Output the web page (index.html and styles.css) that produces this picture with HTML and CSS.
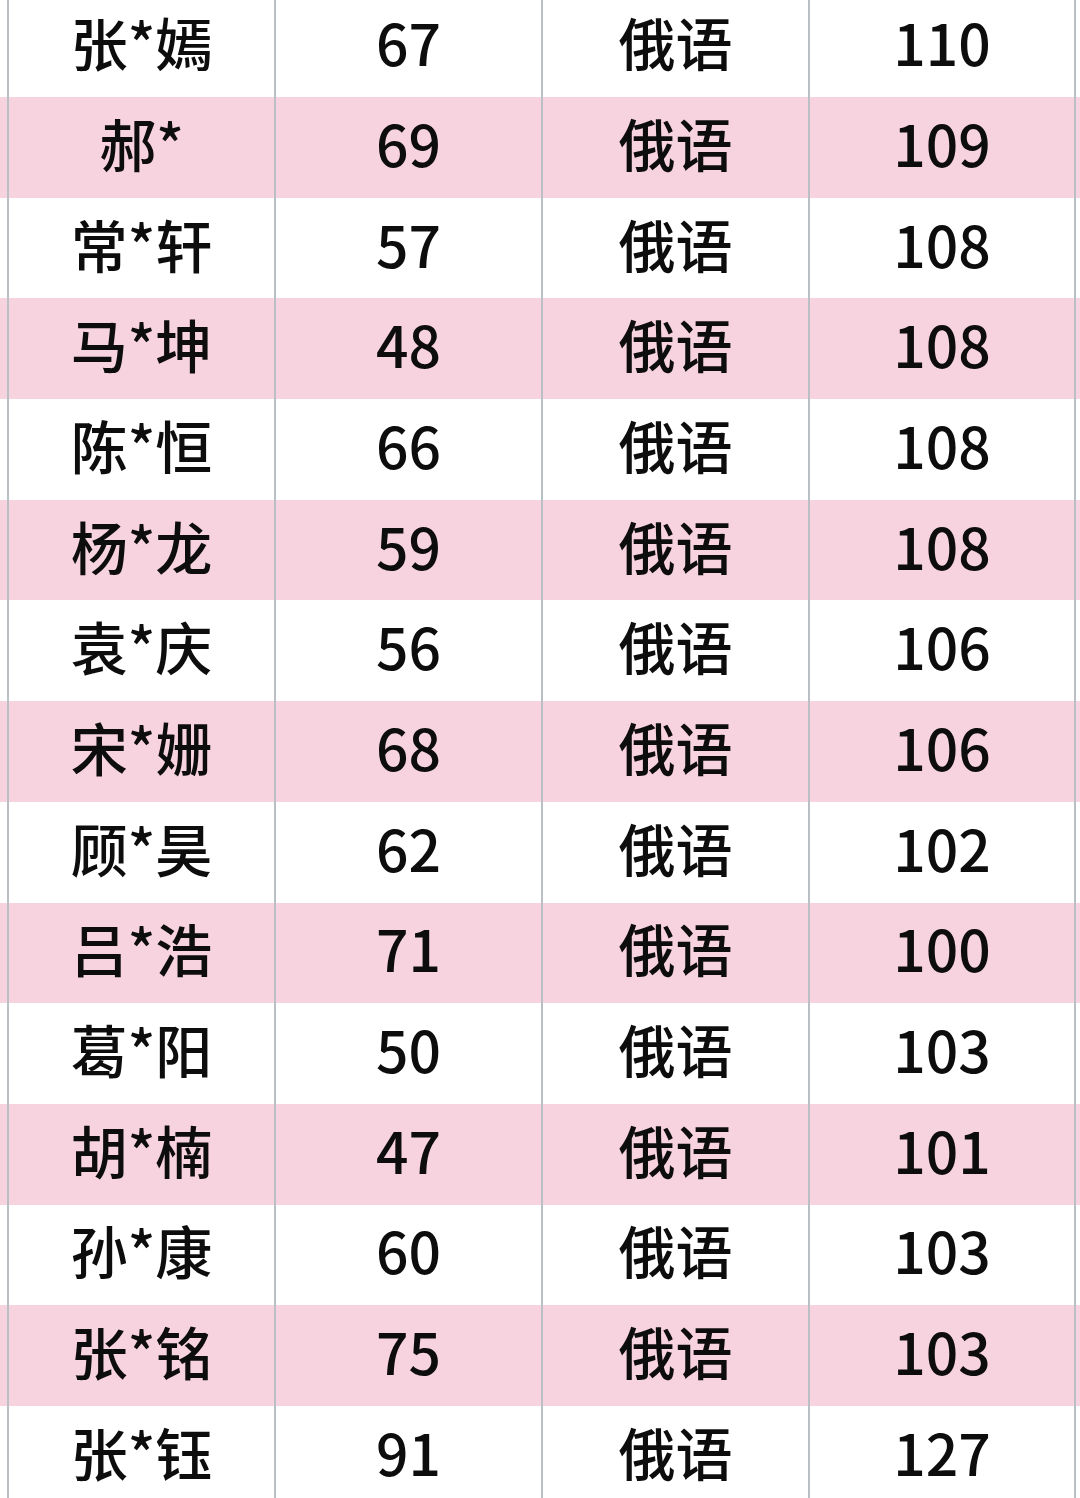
FILE: index.html
```html
<!DOCTYPE html>
<html lang="zh">
<head>
<meta charset="utf-8">
<title>成绩表</title>
<link rel="stylesheet" href="styles.css">
</head>
<body>
<div class="page">
  <div class="table">
    <div class="row"><div class="cell">张*嫣</div><div class="cell">67</div><div class="cell">俄语</div><div class="cell last">110</div></div>
    <div class="row pink"><div class="cell">郝*</div><div class="cell">69</div><div class="cell">俄语</div><div class="cell last">109</div></div>
    <div class="row"><div class="cell">常*轩</div><div class="cell">57</div><div class="cell">俄语</div><div class="cell last">108</div></div>
    <div class="row pink"><div class="cell">马*坤</div><div class="cell">48</div><div class="cell">俄语</div><div class="cell last">108</div></div>
    <div class="row"><div class="cell">陈*恒</div><div class="cell">66</div><div class="cell">俄语</div><div class="cell last">108</div></div>
    <div class="row pink"><div class="cell">杨*龙</div><div class="cell">59</div><div class="cell">俄语</div><div class="cell last">108</div></div>
    <div class="row"><div class="cell">袁*庆</div><div class="cell">56</div><div class="cell">俄语</div><div class="cell last">106</div></div>
    <div class="row pink"><div class="cell">宋*姗</div><div class="cell">68</div><div class="cell">俄语</div><div class="cell last">106</div></div>
    <div class="row"><div class="cell">顾*昊</div><div class="cell">62</div><div class="cell">俄语</div><div class="cell last">102</div></div>
    <div class="row pink"><div class="cell">吕*浩</div><div class="cell">71</div><div class="cell">俄语</div><div class="cell last">100</div></div>
    <div class="row"><div class="cell">葛*阳</div><div class="cell">50</div><div class="cell">俄语</div><div class="cell last">103</div></div>
    <div class="row pink"><div class="cell">胡*楠</div><div class="cell">47</div><div class="cell">俄语</div><div class="cell last">101</div></div>
    <div class="row"><div class="cell">孙*康</div><div class="cell">60</div><div class="cell">俄语</div><div class="cell last">103</div></div>
    <div class="row pink"><div class="cell">张*铭</div><div class="cell">75</div><div class="cell">俄语</div><div class="cell last">103</div></div>
    <div class="row"><div class="cell">张*钰</div><div class="cell">91</div><div class="cell">俄语</div><div class="cell last">127</div></div>
  </div>
</div>
</body>
</html>
```

FILE: styles.css
```css
html, body {
  margin: 0;
  padding: 0;
  background: #ffffff;
}
.page {
  width: 1080px;
  height: 1498px;
  overflow: hidden;
}
.table {
  margin-top: -3.7px;
  font-family: "Noto Sans CJK SC", "Noto Sans", sans-serif;
  font-size: 57px;
  font-weight: 500;
  color: #0d0d0d;
}
.row {
  display: grid;
  grid-template-columns: 7px 267px 267px 267px 268px 4px;
  height: 100.7px;
  background: #ffffff;
}
.row.pink {
  background: #f7d2df;
}
.row::before {
  content: "";
}
.cell {
  border-left: 2px solid #b9bfc2;
  display: flex;
  align-items: center;
  justify-content: center;
  line-height: 1;
  padding-bottom: 10px;
  box-sizing: border-box;
}
.cell.last {
  border-right: 2px solid #b9bfc2;
}
```
